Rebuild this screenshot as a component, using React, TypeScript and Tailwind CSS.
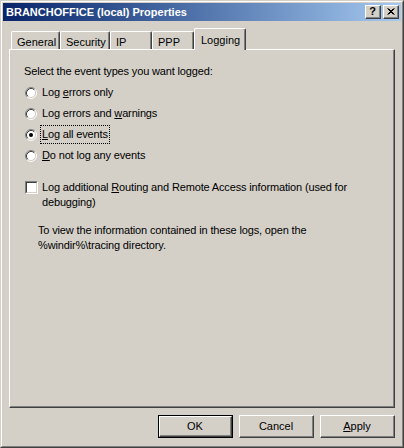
import React from "react";

const font = { fontFamily: '"Liberation Sans", Arial, sans-serif' };

function Radio({ checked }: { checked?: boolean }) {
  return (
    <svg width="12" height="12" viewBox="0 0 12 12" className="shrink-0">
      <circle cx="6" cy="6" r="4.5" fill="#ffffff" />
      <path d="M2.11 9.89 A5.5 5.5 0 0 1 9.89 2.11" fill="none" stroke="#808080" />
      <path d="M9.89 2.11 A5.5 5.5 0 0 1 2.11 9.89" fill="none" stroke="#ffffff" />
      <path d="M2.82 9.18 A4.5 4.5 0 0 1 9.18 2.82" fill="none" stroke="#404040" />
      <path d="M9.18 2.82 A4.5 4.5 0 0 1 2.82 9.18" fill="none" stroke="#d4d0c8" />
      {checked && <circle cx="6" cy="6" r="2" fill="#000000" />}
    </svg>
  );
}

function Checkbox() {
  return (
    <div className="w-[13px] h-[13px] shrink-0 border border-t-[#808080] border-l-[#808080] border-r-white border-b-white">
      <div className="w-full h-full bg-white border border-t-[#404040] border-l-[#404040] border-r-[#d4d0c8] border-b-[#d4d0c8]" />
    </div>
  );
}

function CaptionButton({ children }: { children: React.ReactNode }) {
  return (
    <div className="w-[16px] h-[14px] border border-t-white border-l-white border-r-[#404040] border-b-[#404040] bg-[#d4d0c8]">
      <div className="w-full h-full flex items-center justify-center border-r border-b border-[#808080]">
        {children}
      </div>
    </div>
  );
}

function Tab({ label, w, selected }: { label: string; w: string; selected?: boolean }) {
  if (selected) {
    return (
      <div
        className={`${w} h-[22px] -mb-[1px] relative z-10 bg-[#d4d0c8] border-t border-l border-white border-r border-r-[#404040] shadow-[inset_-1px_0_#808080] rounded-t-[2px] pl-[6px] pt-[3px] text-[11px] text-black`}
      >
        {label}
      </div>
    );
  }
  return (
    <div
      className={`${w} h-[18px] bg-[#d4d0c8] border-t border-l border-white border-r border-r-[#404040] shadow-[inset_-1px_0_#808080] rounded-t-[2px] pl-[5px] pt-[2px] text-[11px] text-black`}
    >
      {label}
    </div>
  );
}

function Button({ children, isDefault }: { children: React.ReactNode; isDefault?: boolean }) {
  return (
    <div className={`w-[75px] h-[23px] bg-[#d4d0c8] ${isDefault ? "border border-black" : ""}`}>
      <div className="w-full h-full border border-t-white border-l-white border-r-[#404040] border-b-[#404040]">
        <div className="w-full h-full flex items-center justify-center border-r border-b border-[#808080] text-[11px] text-black">
          {children}
        </div>
      </div>
    </div>
  );
}

export default function App() {
  return (
    <div style={font} className="w-[404px] h-[448px] bg-[#d4d0c8] border border-t-[#d4d0c8] border-l-[#d4d0c8] border-r-[#404040] border-b-[#404040] select-none">
      <div className="w-full h-full border border-t-white border-l-white border-r-[#808080] border-b-[#808080] p-[1px] flex flex-col">
        {/* title bar */}
        <div className="h-[18px] flex items-center bg-gradient-to-r from-[#0a246a] to-[#a6caf0] pl-[3px] pr-[2px]">
          <span className="flex-1 text-white font-bold text-[11px] leading-none">
            BRANCHOFFICE (local) Properties
          </span>
          <div className="flex gap-[2px]">
            <CaptionButton>
              <span className="text-black font-bold text-[11px] leading-none">?</span>
            </CaptionButton>
            <CaptionButton>
              <svg width="8" height="7" viewBox="0 0 8 7">
                <path d="M0.5 0.5 L6.5 6.5 M1.5 0.5 L7.5 6.5 M6.5 0.5 L0.5 6.5 M7.5 0.5 L1.5 6.5" stroke="#000" strokeWidth="1" />
              </svg>
            </CaptionButton>
          </div>
        </div>

        {/* tabs + panel */}
        <div className="px-[6px] pt-[7px] flex-1 flex flex-col">
          <div className="flex items-end pl-[2px] h-[21px]">
            <Tab label="General" w="w-[49px]" />
            <Tab label="Security" w="w-[50px]" />
            <Tab label="IP" w="w-[42px]" />
            <Tab label="PPP" w="w-[42px]" />
            <Tab label="Logging" w="w-[52px]" selected />
          </div>

          <div className="h-[359px] border border-t-white border-l-white border-r-[#404040] border-b-[#404040]">
            <div className="w-full h-full border-r border-b border-[#808080] pt-[11px] text-[11px] tracking-[-0.15px] text-black">
              <div className="h-[21px] flex items-center pl-[14px]">Select the event types you want logged:</div>
              <div className="h-[21px] flex items-center pl-[15px] gap-[5px]">
                <Radio />
                <span>Log <u>e</u>rrors only</span>
              </div>
              <div className="h-[21px] flex items-center pl-[15px] gap-[5px]">
                <Radio />
                <span>Log errors and <u>w</u>arnings</span>
              </div>
              <div className="h-[21px] flex items-center pl-[15px] gap-[4px]">
                <Radio checked />
                <span className="outline outline-1 outline-dotted outline-black px-[1px]"><u>L</u>og all events</span>
              </div>
              <div className="h-[21px] flex items-center pl-[15px] gap-[5px]">
                <Radio />
                <span><u>D</u>o not log any events</span>
              </div>

              <div className="mt-[14px] flex pl-[15px] gap-[4px]">
                <div className="h-[15px] flex items-center">
                  <Checkbox />
                </div>
                <div className="leading-[15px] w-[320px]">
                  Log additional <u>R</u>outing and Remote Access information (used for debugging)
                </div>
              </div>

              <div className="mt-[13px] pl-[28px] leading-[15px] w-[330px]">
                To view the information contained in these logs, open the %windir%\tracing directory.
              </div>
            </div>
          </div>

          {/* buttons */}
          <div className="flex justify-end gap-[6px] mt-[7px]">
            <Button isDefault>OK</Button>
            <Button>Cancel</Button>
            <Button>
              <span><u>A</u>pply</span>
            </Button>
          </div>
        </div>
      </div>
    </div>
  );
}
